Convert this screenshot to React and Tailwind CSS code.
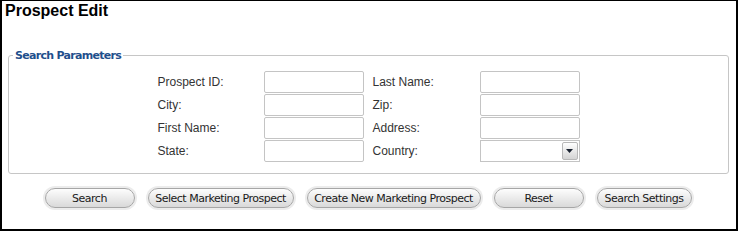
const rows = [
  ["Prospect ID:", "Last Name:"],
  ["City:", "Zip:"],
  ["First Name:", "Address:"],
  ["State:", "Country:"],
];

const buttons = [
  ["Search", "w-[90px]"],
  ["Select Marketing Prospect", "w-[146px]"],
  ["Create New Marketing Prospect", "w-[174px]"],
  ["Reset", "w-[90px]"],
  ["Search Settings", "w-[95px]"],
];

function TextBox() {
  return <div className="w-[100px] h-[22px] border border-[#c4c4c4] rounded-[2px] bg-white" />;
}

function CountrySelect() {
  return (
    <div className="w-[100px] h-[22px] border border-[#c4c4c4] bg-white flex justify-end items-center pr-[1px]">
      <div className="w-[16px] h-[18px] rounded-[2px] border border-[#b8b8b8] bg-gradient-to-b from-white to-[#d4d4d4] flex items-center justify-center">
        <svg width="7" height="4" viewBox="0 0 7 4">
          <path d="M0 0h7L3.5 4z" fill="#1a2230" />
        </svg>
      </div>
    </div>
  );
}

export default function App() {
  return (
    <div className="w-[738px] h-[231px] bg-white border-t border-l-2 border-r-2 border-b-2 border-black font-['Liberation_Sans',Arial,sans-serif] text-[#222]">
      <h1 className="pl-[3px] text-[16px] leading-[20px] font-bold text-black">Prospect Edit</h1>

      <fieldset className="ml-[6px] mr-[7px] mt-[28px] h-[125px] border border-[#c6c6c6] rounded-[3px] px-0 pb-0">
        <legend className="ml-[4px] px-[2px] text-[11px] leading-[13px] font-bold text-[#1f4f8c] font-['DejaVu_Sans',Tahoma,sans-serif] tracking-[-0.7px]">
          Search Parameters
        </legend>
        <div className="flex justify-center pt-[8px]">
          <div className="grid grid-cols-[106px_100px_9px_107px_100px] auto-rows-[23px] text-[12px] text-[#333]">
            {rows.map(([a, b], i) => (
              <div key={i} className="contents">
                <div className="flex items-center">{a}</div>
                <div className="flex items-center"><TextBox /></div>
                <div />
                <div className="flex items-center">{b}</div>
                <div className="flex items-center">{i === 3 ? <CountrySelect /> : <TextBox />}</div>
              </div>
            ))}
          </div>
        </div>
      </fieldset>

      <div className="flex justify-center gap-[13px] mt-[14px] pr-[2px]">
        {buttons.map(([label, w]) => (
          <button
            key={label}
            className={`${w} h-[20px] rounded-full border border-[#a6a6a6] bg-gradient-to-b from-[#fdfdfd] to-[#d9d9d9] ring-2 ring-[#ececec] text-[11px] text-[#1a1a1a] font-['DejaVu_Sans',Tahoma,sans-serif] tracking-[-0.5px] leading-none`}
          >
            {label}
          </button>
        ))}
      </div>
    </div>
  );
}
